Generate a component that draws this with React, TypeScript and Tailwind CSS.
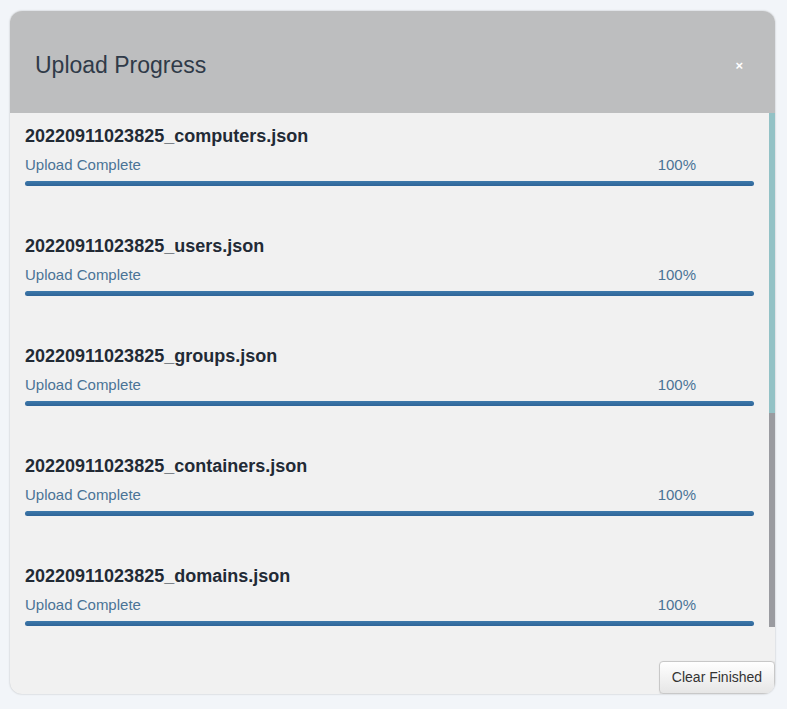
import React from "react";

const FILES = [
  "20220911023825_computers.json",
  "20220911023825_users.json",
  "20220911023825_groups.json",
  "20220911023825_containers.json",
  "20220911023825_domains.json",
  "20220911023825_gpos.json",
  "20220911023825_ous.json",
  "20220911023825_sessions.json",
];

function UploadItem({ name }: { name: string }) {
  return (
    <div className="pt-[12px] pb-[37px]">
      <div className="text-[18px] leading-[22px] font-bold text-[#222a35]">{name}</div>
      <div className="mt-[8px] flex items-center justify-between pr-[58px] text-[15px] leading-[20px] text-[#4a7396]">
        <span>Upload Complete</span>
        <span>100%</span>
      </div>
      <div className="mt-[6px] h-[5px] w-full rounded-full bg-[#dfe4ea]">
        <div className="h-full w-full rounded-full bg-gradient-to-b from-[#3d79ab] to-[#2f6598]" />
      </div>
    </div>
  );
}

export default function App() {
  return (
    <div
      className="min-h-[709px] w-full bg-[#f2f5f9] pt-[11px] pl-[10px]"
      style={{ fontFamily: '"Liberation Sans", Arial, sans-serif' }}
    >
      <div className="flex h-[683px] w-[765px] flex-col overflow-hidden rounded-[12px] bg-[#f1f1f1] shadow-[0_0_2px_rgba(0,0,0,0.25)]">
        <div className="flex h-[102px] shrink-0 items-center justify-between bg-[#bdbebf] pt-[5px] pl-[25px] pr-[32px]">
          <h2 className="text-[23px] leading-[28px] text-[#2f3a48]">Upload Progress</h2>
          <button className="mt-[2px] text-[13px] leading-none font-bold text-white">×</button>
        </div>
        <div className="flex h-[514px] shrink-0">
          <div className="flex-1 overflow-hidden pl-[15px] pr-[15px]">
            {FILES.map((f) => (
              <UploadItem key={f} name={f} />
            ))}
          </div>
          {/* scrollbar */}
          <div className="flex w-[6px] flex-col bg-[#9a9ba0]">
            <div className="h-[300px] bg-[#93c2c6]" />
          </div>
        </div>
        <div className="flex flex-1 items-end justify-end">
          <button className="h-[33px] w-[116px] rounded-[4px] border border-[#c8c8c8] bg-gradient-to-b from-white to-[#e6e6e6] text-[14px] text-[#333] shadow-[1px_1px_2px_rgba(0,0,0,0.25)]">
            Clear Finished
          </button>
        </div>
      </div>
    </div>
  );
}
